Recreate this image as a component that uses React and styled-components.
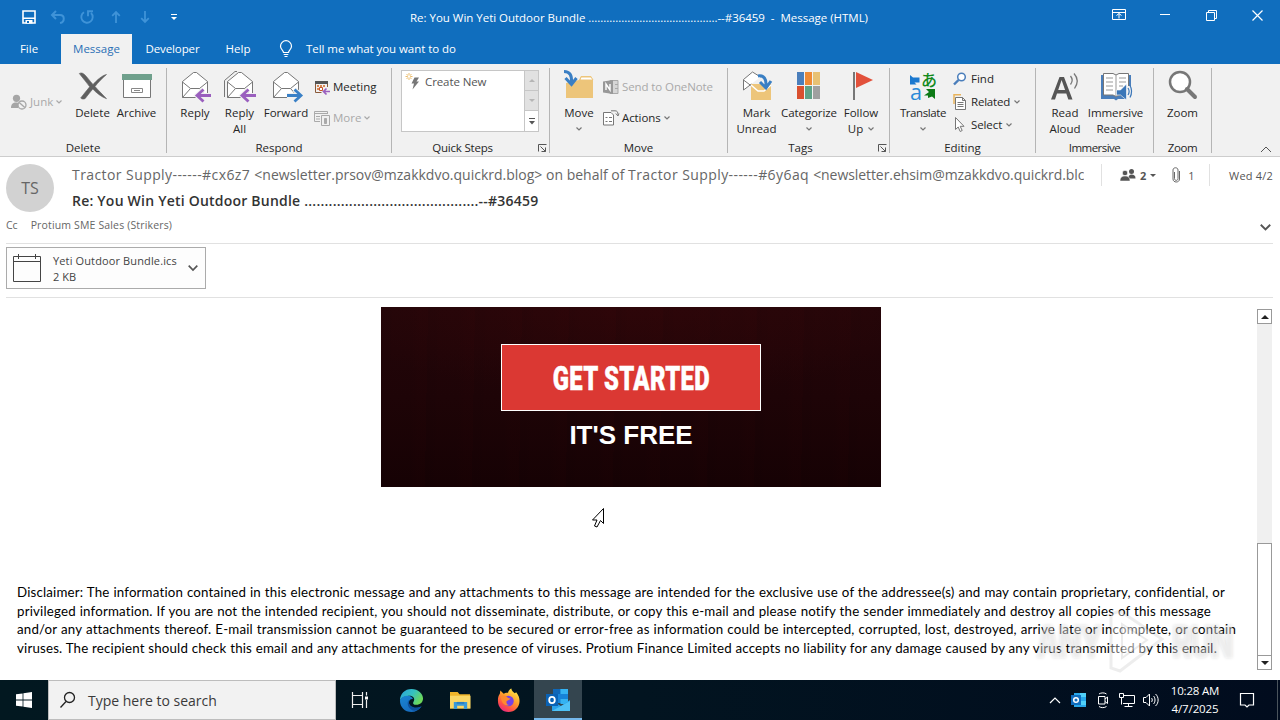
import React from 'react';
import styled, { createGlobalStyle } from 'styled-components';

const GlobalStyle = createGlobalStyle`
  * {
    box-sizing: border-box;
  }

  body {
    margin: 0;
    overflow: hidden;
    background: #fff;
    font-family: 'Open Sans', 'Noto Sans', sans-serif;
    font-size: 11.5px;
    color: #262626;
  }

  svg {
    display: block;
    flex: none;
    overflow: visible;
  }
`;

const Window = styled.div`
  width: 1280px;
  height: 720px;
  display: flex;
  flex-direction: column;
  overflow: hidden;
`;

const Label = styled.span`
  white-space: pre;
  letter-spacing: ${(p) => p.$ls || 0}px;
`;

/* ---------- title bar ---------- */

const TitleBar = styled.header`
  height: 34px;
  background: #106ebe;
  color: #fff;
  display: grid;
  grid-template-columns: 320px 638px 322px;
  align-items: center;
`;

const QuickAccess = styled.div`
  display: flex;
  align-items: center;
  gap: 13px;
  padding-left: 21px;
`;

const WindowTitle = styled.div`
  text-align: center;
`;

const WindowButtons = styled.div`
  display: flex;
  height: 30px;
  align-self: start;
  padding-left: 138px;
`;

const WindowButton = styled.div`
  width: 46px;
  display: flex;
  align-items: center;
  justify-content: center;
`;

const TabBar = styled.nav`
  height: 30px;
  background: #106ebe;
  color: #fff;
  display: flex;
`;

const Tab = styled.div`
  width: ${(p) => p.$width}px;
  padding-bottom: 1px;
  display: flex;
  align-items: center;
  justify-content: center;
  background: ${(p) => (p.$active ? '#f1f1f1' : 'transparent')};
  color: ${(p) => (p.$active ? '#2a6fb5' : '#fff')};
`;

const TellMe = styled.div`
  display: flex;
  align-items: center;
  gap: 13px;
  margin-left: 16px;
  padding-bottom: 1px;
`;

/* ---------- ribbon ---------- */

const Ribbon = styled.section`
  height: 93px;
  background: #f1f1f1;
  border-bottom: 1px solid #cdcdcd;
  display: flex;
`;

const Group = styled.div`
  width: ${(p) => p.$width}px;
  padding-top: 6px;
  display: flex;
  flex-direction: column;
`;

const GroupBody = styled.div`
  height: 70px;
  display: flex;
  padding-left: ${(p) => p.$left || 0}px;
`;

const GroupFooter = styled.div`
  height: 16px;
  line-height: 16px;
  display: flex;
  align-items: center;
`;

const GroupName = styled.div`
  flex: 1;
  text-align: center;
  white-space: nowrap;
`;

const Separator = styled.div`
  width: 1px;
  height: 85px;
  margin-top: 4px;
  background: #b5b5b5;
`;

const BigButton = styled.div`
  width: ${(p) => p.$width}px;
  display: flex;
  flex-direction: column;
  align-items: center;
  line-height: 16px;
  white-space: nowrap;

  > svg:first-child {
    margin-bottom: 3px;
  }
`;

const SecondLine = styled.div`
  height: 16px;
  display: flex;
  align-items: center;
  gap: 5px;
`;

const SmallColumn = styled.div`
  display: flex;
  flex-direction: column;
  width: ${(p) => (p.$width ? `${p.$width}px` : 'auto')};
  margin-left: ${(p) => p.$left || 0}px;
  margin-top: ${(p) => p.$top || 0}px;
`;

const SmallButton = styled.div`
  height: ${(p) => p.$height || 31}px;
  display: flex;
  align-items: center;
  gap: ${(p) => p.$gap || 3}px;
  color: ${(p) => (p.$disabled ? '#a9a9a9' : 'inherit')};
`;

const Gallery = styled.div`
  width: 138px;
  height: 62px;
  display: flex;
  border: 1px solid #c6c6c6;
  background: #fff;
`;

const GalleryItem = styled.div`
  flex: 1;
  height: 21px;
  display: flex;
  align-items: center;
  gap: 4px;
  padding-left: 3px;
  color: #555;
`;

const GalleryScroll = styled.div`
  width: 14px;
  display: grid;
  grid-template-rows: 20px 20px 20px;
  border-left: 1px solid #c6c6c6;
`;

const GalleryArrow = styled.div`
  display: flex;
  align-items: center;
  justify-content: center;
  background: ${(p) => (p.$off ? '#e1e1e1' : '#fff')};
  border-bottom: ${(p) => (p.$off ? '1px solid #c6c6c6' : 'none')};
`;

const RibbonEnd = styled.div`
  flex: 1;
  display: flex;
  justify-content: flex-end;
  align-items: flex-end;
  padding: 0 8px 3px 0;
`;

/* ---------- message header ---------- */

const Header = styled.section`
  height: 87px;
  margin: 0 7px 0 6px;
  border-bottom: 1px solid #e1e1e1;
  display: flex;
  flex-direction: column;
`;

const HeaderTop = styled.div`
  display: flex;
  height: 58px;
  padding-top: 7px;
`;

const Avatar = styled.div`
  width: 48px;
  height: 48px;
  border-radius: 50%;
  background: #d2d2d2;
  color: #666;
  font-size: 16px;
  display: flex;
  align-items: center;
  justify-content: center;
`;

const Sender = styled.div`
  width: 1013px;
  margin-left: 17px;
  padding-left: 1px;
  overflow: hidden;
  color: #666;
`;

const FromLine = styled.div`
  font-size: 14px;
  line-height: 22px;
  height: 24px;
  white-space: nowrap;
`;

const Subject = styled.div`
  font-size: 14px;
  line-height: 26px;
  font-weight: 600;
  color: #333;
`;

const HeaderMeta = styled.div`
  height: 22px;
  margin-left: 17px;
  flex: 1;
  display: flex;
  align-items: center;
  border-left: 1px solid #e1e1e1;
  color: #555;
  font-size: 11px;
`;

const MetaItem = styled.div`
  display: flex;
  align-items: center;
  gap: ${(p) => p.$gap}px;
  margin-left: ${(p) => p.$left}px;
`;

const MetaDate = styled.div`
  height: 22px;
  line-height: 24px;
  margin-left: auto;
  padding-left: 19px;
  border-left: 1px solid #e1e1e1;
  white-space: nowrap;
`;

const CcLine = styled.div`
  height: 20px;
  display: flex;
  align-items: center;
  gap: 13px;
  color: #666;
  font-size: 10.5px;

  > svg {
    margin-left: auto;
    margin-top: 4px;
    margin-right: 2px;
  }
`;

const Attachments = styled.section`
  height: 54px;
  margin: 0 7px 0 6px;
  padding-top: 3px;
  border-bottom: 1px solid #e1e1e1;
`;

const Attachment = styled.div`
  width: 200px;
  height: 42px;
  border: 1px solid #ababab;
  background: #fdfdfd;
  display: flex;
  align-items: center;
  padding-left: 5px;
  font-size: 11px;
  line-height: 16px;
  color: #444;
`;

const FileInfo = styled.div`
  width: 124px;
  margin-left: 11px;
  margin-right: 11px;
  padding-top: 1px;
  display: flex;
  flex-direction: column;
`;

/* ---------- message body ---------- */

const Body = styled.main`
  height: 382px;
  display: flex;
  position: relative;
`;

const Content = styled.article`
  width: 1257px;
  padding: 9px 0 0 17px;
`;

const Banner = styled.div`
  width: 500px;
  height: 180px;
  margin-left: 364px;
  padding-top: 37px;
  display: flex;
  flex-direction: column;
  align-items: center;
  background:
    repeating-linear-gradient(91deg, rgba(0, 0, 0, 0.04) 0 5px, transparent 14px 31px, rgba(80, 0, 0, 0.03) 39px 47px),
    radial-gradient(ellipse 300px 90px at 50% 0, rgba(52, 6, 9, 0.6), transparent),
    linear-gradient(#240609, #1e0407 50%, #160204);
`;

const CallToAction = styled.div`
  width: 260px;
  height: 67px;
  border: 1px solid #fff;
  background: #db3833;
  color: #fff;
  display: flex;
  align-items: center;
  justify-content: center;
`;

const CallText = styled.span`
  font-family: Roboto, sans-serif;
  font-weight: 900;
  font-size: 34px;
  letter-spacing: 0.5px;
  white-space: nowrap;
  -webkit-text-stroke: 0.5px #fff;
  transform: scaleX(0.7);
`;

const FreeText = styled.div`
  margin-top: 8px;
  font: bold 26px/32px 'Liberation Sans', Arial, sans-serif;
  color: #fff;
`;

const Disclaimer = styled.div`
  margin-top: 96px;
  font-family: Lato, 'Open Sans', sans-serif;
  font-size: 13.3px;
  color: #000;
`;

const DisclaimerLine = styled.div`
  width: ${(p) => p.$width}px;
  height: 18.7px;
  line-height: 18.7px;
  white-space: nowrap;
  text-align: justify;
  text-align-last: justify;
  letter-spacing: 0.18px;
`;

const ScrollBar = styled.div`
  width: 15px;
  height: 361px;
  margin-top: 11px;
  background: #f0f0f0;
  display: flex;
  flex-direction: column;
`;

const ScrollButton = styled.div`
  height: 15px;
  border: 1px solid #999;
  background: #fff;
  display: flex;
  align-items: center;
  justify-content: center;
`;

const ScrollThumb = styled.div`
  height: 112px;
  margin-top: auto;
  border: 1px solid #999;
  border-bottom: none;
  background: #fff;
`;

const Pointer = styled.svg`
  position: absolute;
  left: 591px;
  top: 210px;
`;

const Watermark = styled.div`
  position: absolute;
  left: 1036px;
  top: 310px;
  width: 200px;
  height: 66px;
  display: flex;
  align-items: center;
  justify-content: space-between;
  font: 900 46px/60px Inter, sans-serif;
  color: rgba(255, 255, 255, 0.42);
  text-shadow: 0 0 4px rgba(0, 0, 0, 0.12);
`;

const WatermarkWord = styled.span`
  width: 64px;
  letter-spacing: -3px;
  transform: scaleX(0.66);
  transform-origin: left;
`;

/* ---------- taskbar ---------- */

const Taskbar = styled.footer`
  height: 40px;
  background: linear-gradient(90deg, #021820, #021420 50%, #010c1e);
  color: #fff;
  display: flex;
`;

const StartButton = styled.div`
  width: 48px;
  display: flex;
  align-items: center;
  justify-content: center;
`;

const SearchBox = styled.div`
  width: 288px;
  border: 1px solid #bdbdbd;
  background: #f2f2f2;
  color: #3a3a3a;
  display: flex;
  align-items: center;
  gap: 11px;
  padding-left: 10px;
  font-size: 14px;
`;

const TaskButton = styled.div`
  width: ${(p) => p.$width}px;
  display: flex;
  align-items: center;
  justify-content: center;
  padding-top: ${(p) => (p.$active ? 2 : 0)}px;
  background: ${(p) => (p.$active ? '#34454f' : 'transparent')};
  border-bottom: ${(p) => (p.$active ? '2px solid #76b9ed' : 'none')};
`;

const Tray = styled.div`
  margin-left: auto;
  display: flex;
`;

const TrayIcon = styled.div`
  width: ${(p) => p.$width || 24}px;
  display: flex;
  align-items: center;
  justify-content: center;
`;

const Clock = styled.div`
  width: 64px;
  display: flex;
  flex-direction: column;
  align-items: center;
  font-size: 11.5px;
  line-height: 18px;
  padding-top: 2px;
`;

const ShowDesktop = styled.div`
  width: 3px;
  margin-left: 10px;
  border-left: 1px solid #4a545c;
`;

/* ---------- icons ---------- */

const Chevron = ({ color = '#777' }) => (
  <svg width="6" height="4" viewBox="0 0 6 4">
    <path d="M0.5 0.5L3 3L5.5 0.5" fill="none" stroke={color} strokeWidth="1.2" />
  </svg>
);

const BigChevron = ({ color = '#555', size = 10 }) => (
  <svg width={size} height={size * 0.6} viewBox="0 0 10 6">
    <path d="M0.7 0.7L5 5L9.3 0.7" fill="none" stroke={color} strokeWidth="1.7" />
  </svg>
);

const Launcher = () => (
  <svg width="16" height="16" viewBox="0 0 16 16">
    <path d="M5.500 11.500v-7h8M7.500 6.500l5 5M12.500 7.500v4h-4" fill="none" stroke="#555" />
  </svg>
);

const SaveIcon = () => (
  <svg width="16" height="16" viewBox="0 0 16 16">
    <path d="M2 2h12v12H2z" fill="none" stroke="#fff" strokeWidth="1.6" />
    <path d="M2 8.5h12v1.6H2zM4.5 11h7v3.5h-7z" fill="#fff" />
    <path d="M6 12h2v2H6z" fill="#106ebe" />
  </svg>
);

const UndoIcon = () => (
  <svg width="16" height="16" viewBox="0 0 16 16">
    <path d="M6 2L2 6l4 4M2.5 6H10c5 0 5 7 0 8" fill="none" stroke="#3f93d8" strokeWidth="2" />
  </svg>
);

const RedoIcon = () => (
  <svg width="16" height="16" viewBox="0 0 16 16">
    <path d="M5 3.2A5.7 5.7 0 1 0 12 4M9 7.2V2.3h5" fill="none" stroke="#3f93d8" strokeWidth="1.9" />
  </svg>
);

const ArrowIcon = ({ down }) => (
  <svg width="16" height="16" viewBox="0 0 16 16" transform={down ? 'rotate(180)' : undefined}>
    <path d="M8 14V3M4.2 6.8L8 3l3.8 3.8" fill="none" stroke="#3f93d8" strokeWidth="1.8" />
  </svg>
);

const CustomizeIcon = () => (
  <svg width="16" height="16" viewBox="0 0 16 16">
    <path d="M5 5.5h6" stroke="#fff" />
    <path d="M5 8h6l-3 3z" fill="#fff" />
  </svg>
);

const BulbIcon = () => (
  <svg width="14" height="18" viewBox="0 0 14 18">
    <path d="M4.5 12.5c0-2-3-3-3-6.3a5.5 5.5 0 0 1 11 0c0 3.300-3 4.300-3 6.300zM4.700 14.500h4.600M5.500 16.500h3" fill="none" stroke="#fff" strokeWidth="1.2" />
  </svg>
);

const JunkIcon = () => (
  <svg width="16" height="16" viewBox="0 0 16 16">
    <circle cx="5.500" cy="4.300" r="3.600" fill="#a6a6a6" />
    <path d="M0 14c0-4 2-5.500 5-5.500 1.500 0 2.500.3 3 .8L7 14z" fill="#a6a6a6" />
    <circle cx="11" cy="11" r="4" fill="#f1f1f1" stroke="#a6a6a6" strokeWidth="1.300" />
    <path d="M8.200 8.500l5.600 5" stroke="#a6a6a6" strokeWidth="1.300" />
  </svg>
);

const DeleteIcon = () => (
  <svg width="32" height="32" viewBox="0 0 32 32">
    <path d="M2.300 3.500C4 2.500 6 3 7.500 4.500c3 3 5 6 8.500 10C20 10 25 5.500 29.500 4.500c-4.500 4-8.500 8-11.500 12 3.500 4 7 7.500 11.500 12.200-5-1.700-10-5.700-13.700-9.700-3 3.500-5.300 6.500-7.600 9.500-1.400 1-3.600.6-4.500-.5 3-4 6-7.500 9-11.200C9.500 12 5.500 8 2.300 3.500z" fill="#5f5f5f" stroke="#5f5f5f" strokeWidth="0.600" />
  </svg>
);

const ArchiveIcon = () => (
  <svg width="32" height="32" viewBox="0 0 32 32">
    <path d="M2.500 9.500h27v18h-27z" fill="#fff" stroke="#777" />
    <path d="M1 4h30v6H1z" fill="#6fa08c" />
    <path d="M10.500 18.500h11v4h-11zM13 20.500h6" fill="none" stroke="#888" />
  </svg>
);

const Envelope = ({ x = 0 }) => (
  <g transform={`translate(${x} 0)`} stroke="#777" fill="#fff">
    <path d="M3.500 11.500L14.500 2.500h3l11 9v16h-25z" />
    <path d="M3.500 12l8 6.500h9l8-6.500M3.500 27.500l8-9M28.500 27.500l-8-9" fill="none" />
  </g>
);

const ReplyArrow = ({ color, right }) => (
  <g transform={right ? 'translate(48 0) scale(-1 1)' : undefined}>
    <path d="M32 25.500H18.500M24.500 19.500l-6.500 6 6.500 6" fill="none" stroke="#f1f1f1" strokeWidth="5" />
    <path d="M32 25.500H18.500M24.500 19.500l-6.500 6 6.500 6" fill="none" stroke={color} strokeWidth="2.800" />
  </g>
);

const ReplyIcon = () => (
  <svg width="32" height="32" viewBox="0 0 32 32">
    <Envelope />
    <ReplyArrow color="#9a5fbe" />
  </svg>
);

const ReplyAllIcon = () => (
  <svg width="32" height="32" viewBox="0 0 32 32">
    <path d="M0.500 27V10.500L11 1.500h2" fill="none" stroke="#777" />
    <Envelope />
    <ReplyArrow color="#9a5fbe" />
  </svg>
);

const ForwardIcon = () => (
  <svg width="32" height="32" viewBox="0 0 32 32">
    <Envelope />
    <g transform="translate(1 0)">
      <ReplyArrow color="#3a80c6" right />
    </g>
  </svg>
);

const MeetingIcon = () => (
  <svg width="16" height="16" viewBox="0 0 16 16">
    <path d="M1.500 3v10.500h6M13.500 3v5" fill="none" stroke="#8a5a3a" />
    <path d="M1 2h13v3H1z" fill="#555" />
    <path d="M3 6h2v2H3zM6 6h2v2H6zM9 6h2v2H9zM3 9h2v2H3z" fill="#d98a56" />
    <path d="M5.500 8.500h3v3h-3z" fill="#fff" stroke="#c8552a" />
    <path d="M16 12.500H9.500M12.500 9.500l-3 3 3 3" fill="none" stroke="#9a5fbe" strokeWidth="1.700" />
  </svg>
);

const MoreIcon = () => (
  <svg width="16" height="16" viewBox="0 0 16 16" fill="none" stroke="#aaa">
    <path d="M6 11.500H.500v-10h13V4M.500 3.500h13M2 6.500h4M2 9h4" />
    <path d="M7.500 5.500h8v10h-8z" />
    <path d="M10.500 8.500h2v5h-2z" fill="#aaa" />
  </svg>
);

const QuickStepIcon = () => (
  <svg width="16" height="18" viewBox="0 0 16 18">
    <path d="M9.500 4.500h4.500l-2.500 4H14l-6.500 8 1.500-6H6.500z" fill="#777" />
    <path d="M4 0v7M.500 3.500h7M1.500 1l5 5M6.500 1l-5 5" stroke="#e9b45c" strokeWidth="0.900" />
    <circle cx="4" cy="3.500" r="1.200" fill="#fff" />
  </svg>
);

const MoveIcon = () => (
  <svg width="32" height="32" viewBox="0 0 32 32">
    <path d="M3 28V13l13-3 2-4h10l2 4v18z" fill="#edc57a" />
    <path d="M18 7h10l2 3H17z" fill="#fff" stroke="#edc57a" />
    <path d="M1 1.500c6 0 8 4 7.500 11M2.500 8l6 6.500 5-6.500" fill="none" stroke="#3a7fc4" strokeWidth="3" />
  </svg>
);

const OneNoteIcon = () => (
  <svg width="16" height="16" viewBox="0 0 16 16">
    <path d="M7 1.500h8v13H7zM12 5.500h3M12 9.500h3" fill="#d6d6d6" stroke="#a9a9a9" />
    <path d="M0 2.500L10 1v14L0 13.500z" fill="#989898" />
    <path d="M3 11V5l4 6V5" fill="none" stroke="#fff" strokeWidth="1.400" />
  </svg>
);

const ActionsIcon = () => (
  <svg width="16" height="16" viewBox="0 0 16 16" fill="none" stroke="#777">
    <path d="M.500 2.500H8l2.500 2.500v10H.500z" fill="#fff" />
    <path d="M2.500 7.500h2M2.500 11.500h2M6 7.500h3M6 11.500h3" />
    <path d="M8 .800h4c2 0 3 1 3 4M12.800 3.500L15 6l1-2.500" />
  </svg>
);

const MarkUnreadIcon = () => (
  <svg width="32" height="32" viewBox="0 0 32 32">
    <path d="M2.500 20V9.500L11.500 2l8 5" fill="#fff" stroke="#777" />
    <path d="M2.500 10l8 6M2.500 20l8-6" fill="none" stroke="#777" />
    <path d="M10 14h20v16H10z" fill="#edc57a" />
    <path d="M10 15l7 6h6l7-6" fill="none" stroke="#fff" strokeWidth="1.500" />
    <path d="M17 6c6-1 8.500 3 8 10M19 12l6 6 5-7" fill="none" stroke="#3a7fc4" strokeWidth="3" />
  </svg>
);

const CategorizeIcon = () => (
  <svg width="32" height="32" viewBox="0 0 32 32">
    <path d="M4 2h7v13H4z" fill="#4a7ebb" />
    <path d="M12 2h7v13h-7z" fill="#ee8a35" />
    <path d="M20 2h7v13h-7z" fill="#e8c173" />
    <path d="M4 16h7v13H4z" fill="#d9502f" />
    <path d="M12 16h7v13h-7z" fill="#5fa287" />
    <path d="M20 16h7v13h-7z" fill="#a0a0a0" />
  </svg>
);

const FlagIcon = () => (
  <svg width="32" height="32" viewBox="0 0 32 32">
    <path d="M9 2v28" stroke="#777" strokeWidth="2" />
    <path d="M11 2l17 8-17 8z" fill="#e2513b" />
  </svg>
);

const GlyphText = styled.text`
  font-family: ${(p) => p.$family || "'Open Sans', sans-serif"};
`;

const TranslateIcon = () => (
  <svg width="32" height="32" viewBox="0 0 32 32">
    <GlyphText x="3" y="29.500" fontSize="22" fontWeight="500" fill="#2a8ad8" textLength="12" lengthAdjust="spacingAndGlyphs">a</GlyphText>
    <GlyphText x="14" y="15.500" fontSize="16" fontWeight="500" fill="#128a1c" $family="'Noto Sans CJK JP', sans-serif">あ</GlyphText>
    <path d="M3 5l3 2.500h6.500v5H7.500l2 2H3z" fill="#1b78cf" />
    <path d="M28 29V19h-9l3 3L17 25.500h4v2.500l4-1.500z" fill="#0d7a16" />
  </svg>
);

const FindIcon = () => (
  <svg width="14" height="14" viewBox="0 0 14 14">
    <circle cx="8.500" cy="5" r="3.800" fill="#fff" stroke="#4a7ebb" strokeWidth="1.500" />
    <path d="M5.500 8L1 12.500" stroke="#4a7ebb" strokeWidth="2.400" />
  </svg>
);

const RelatedIcon = () => (
  <svg width="14" height="16" viewBox="0 0 14 16">
    <path d="M1 10V.800h7" fill="none" stroke="#e9b45c" strokeWidth="1.500" />
    <path d="M2.500 3.500h7l3 3v9h-10zM9.500 3.500v3h3M4.500 8.500h6M4.500 10.500h6M4.500 12.500h6" fill="#fff" stroke="#777" />
  </svg>
);

const SelectIcon = () => (
  <svg width="14" height="16" viewBox="0 0 14 16">
    <path d="M2.500.500v12l2.700-2.500 2 4.500 2-1-2-4.200H11z" fill="#fff" stroke="#777" />
  </svg>
);

const ReadAloudIcon = () => (
  <svg width="32" height="32" viewBox="0 0 32 32">
    <path d="M2 29.500L10.500 7h4.500l8.500 22.500h-4.200l-2-6H8l-2 6zM9.200 20h6.900L12.600 10z" fill="#555" fillRule="evenodd" />
    <path d="M21.500 6c2 2.500 2 6 0 8.500M25 3.500c4 4.500 4 10 .500 15" fill="none" stroke="#777" strokeWidth="1.300" />
  </svg>
);

const ReaderIcon = () => (
  <svg width="32" height="32" viewBox="0 0 32 32">
    <path d="M1 5h30v24H18l-2 1.500-2-1.500H1z" fill="#4a7ebb" />
    <path d="M3.500 3.500h9.500l3 1.500 3-1.500h9.500V25H19l-3 1.500-3-1.500H3.500z" fill="#fff" stroke="#777" />
    <path d="M16 5v21M6 8h7M6 12h7M6 16h7M6 20h7M19 8h7M19 12h7M19 16h4" stroke="#999" fill="none" />
    <path d="M25 16h7v15h-7z" fill="#f1f1f1" />
    <path d="M16.500 20h4l6-6v16l-6-5h-4z" fill="#3a76b8" stroke="#fff" strokeWidth="0.600" />
    <path d="M28 18c1.300 2 1.300 5 0 7M30 15.500c2 3.500 2 8 0 12" fill="none" stroke="#3a76b8" strokeWidth="1.200" />
  </svg>
);

const ZoomIcon = () => (
  <svg width="32" height="32" viewBox="0 0 32 32">
    <circle cx="13" cy="12" r="10" fill="#fff" stroke="#777" strokeWidth="2.500" />
    <path d="M20 19l8 8" stroke="#777" strokeWidth="4" strokeLinecap="round" />
  </svg>
);

const PeopleIcon = () => (
  <svg width="16" height="14" viewBox="0 0 16 14" fill="#555">
    <circle cx="11.500" cy="3.500" r="2.500" />
    <path d="M8.500 10.500c0-3 1-4 3-4 2.500 0 4 1 4 4z" />
    <circle cx="5" cy="5" r="2.800" stroke="#fff" strokeWidth="0.800" />
    <path d="M0 13c0-3.500 1.500-5 5-5s5 1.500 5 5z" stroke="#fff" strokeWidth="0.500" />
  </svg>
);

const ClipIcon = () => (
  <svg width="9" height="16" viewBox="0 0 9 16">
    <path d="M2.500 5v6.500c0 2.500 3.500 2.500 3.500 0V3c0-3-5-3-5 0v9c0 4 6.500 4 6.500 0V4" fill="none" stroke="#666" />
  </svg>
);

const CalendarIcon = () => (
  <svg width="30" height="30" viewBox="0 0 30 30">
    <path d="M1.500 3.500h27v25h-27zM1.500 8.500h27M6.500 1v5M23.500 1v5" fill="none" stroke="#444" />
  </svg>
);

const Triangle = ({ up, color = '#222', size = 8 }) => (
  <svg width={size} height={size / 2} viewBox="0 0 8 4">
    <path d={up ? 'M0 4L4 0l4 4z' : 'M0 0h8L4 4z'} fill={color} />
  </svg>
);

const WindowsLogo = () => (
  <svg width="16" height="16" viewBox="0 0 16 16" fill="#fff">
    <path d="M0 2.300L6.600 1.400v6.200H0zM7.400 1.300L16 0v7.600H7.400zM0 8.400h6.600v6.200L0 13.700zM7.400 8.400H16V16l-8.600-1.200z" />
  </svg>
);

const SearchIcon = () => (
  <svg width="18" height="18" viewBox="0 0 18 18">
    <circle cx="10.500" cy="6.500" r="5" fill="none" stroke="#222" strokeWidth="1.300" />
    <path d="M7 10.500L1.500 16.500" stroke="#222" strokeWidth="1.300" />
  </svg>
);

const TaskViewIcon = () => (
  <svg width="18" height="18" viewBox="0 0 18 18">
    <path d="M1.500 1v3.500h10V1M1.500 17v-3.500h10V17M1.500 4.500v9M11.500 4.500v9M15.500 1v3.500M15.500 9v8" fill="none" stroke="#eee" strokeWidth="1.200" />
    <path d="M14 5.500h3v3h-3z" fill="#fff" />
  </svg>
);

const EdgeIcon = () => (
  <svg width="25" height="25" viewBox="0 0 26 26">
    <defs>
      <linearGradient id="edgeTop" x1="0" y1="0" x2="1" y2="0.500">
        <stop offset="0" stopColor="#2ba3dc" />
        <stop offset="0.550" stopColor="#35c1c0" />
        <stop offset="1" stopColor="#6cd85a" />
      </linearGradient>
      <linearGradient id="edgeLow" x1="0" y1="0" x2="0.800" y2="1">
        <stop offset="0" stopColor="#1a86d3" />
        <stop offset="1" stopColor="#1567bb" />
      </linearGradient>
    </defs>
    <path d="M1 13C1 6 6 1 13 1s12 5 12 10c0 4-3 6.500-7 6.500-3 0-4-1.500-3-3 2.500-4-1-7-5-6.500-5 .500-8 3-9 5z" fill="url(#edgeTop)" />
    <path d="M1 13c1-3 4-5 8-5 3 0 5 1.500 5.500 3.500-4-1-6 5-1.500 8 4 2.500 8 1 10.500-.500C21 23 17 25 13 25 6 25 1 20 1 13z" fill="url(#edgeLow)" />
    <path d="M10 12.500c-2 3-1 8.500 4.500 11 4 .500 7-1.500 9-4.500-3 1.500-6.500 2-9.500.500-3.500-1.500-4-4-4-7z" fill="#0d4f9c" />
  </svg>
);

const ExplorerIcon = () => (
  <svg width="23" height="21" viewBox="0 0 24 22">
    <path d="M1 2h8l2 2.500h11V19H1z" fill="#f0b429" />
    <path d="M1 6h21.500v13.500H1z" fill="#fbd765" />
    <path d="M5 20v-7.500h14V20h-3.500v-3.500h-7V20z" fill="#3a9ad9" />
    <path d="M8 12.500h8v2H8z" fill="#2b7fc0" />
  </svg>
);

const FirefoxIcon = () => (
  <svg width="25" height="25" viewBox="0 0 26 26">
    <defs>
      <linearGradient id="fox" x1="0.800" y1="0" x2="0.200" y2="1">
        <stop offset="0" stopColor="#fff04a" />
        <stop offset="0.450" stopColor="#ff9a2b" />
        <stop offset="0.750" stopColor="#ff4f47" />
        <stop offset="1" stopColor="#e3238c" />
      </linearGradient>
    </defs>
    <path d="M2 13c0-3 .500-5 2-7l.500-3.500L8 6c1.500-1 3-1 4.500-1C13 3 14.500 1 16 .500c0 2.500 2 3.500 3.500 5L21 4.500c2.500 3 3.500 6 3.500 9C24.500 20 19.500 25 13 25S2 20 2 13z" fill="url(#fox)" />
    <circle cx="13" cy="13.500" r="5.500" fill="#7542e5" />
    <path d="M5 8.500c3-1.500 6 0 7.500 2l2.500.300c0 1.500-3 1.500-4 3 0 0-1 3.500 3 4-4 1.500-8.500-1-9-9.300z" fill="#ff8a2e" />
  </svg>
);

const OutlookIcon = () => (
  <svg width="26" height="26" viewBox="0 0 26 26">
    <path d="M8 2h15v14H8z" fill="#1683d8" />
    <path d="M8 2h7.500v5H8z" fill="#0f67b8" />
    <path d="M15.500 2H23v5h-7.500zM15.500 12H23v5h-7.500z" fill="#35b3f2" />
    <path d="M7 14l9 5 9-6v11H7z" fill="#2aa2ea" />
    <path d="M7 24l18-10v10z" fill="#5fd0fb" opacity="0.700" />
    <path d="M1 7h12v12H1z" fill="#0a62b5" />
    <ellipse cx="7" cy="13" rx="2.800" ry="3.200" fill="none" stroke="#fff" strokeWidth="1.800" />
  </svg>
);

const TrayOutlookIcon = () => (
  <svg width="16" height="16" viewBox="0 0 16 16">
    <path d="M3 1h12v14H3z" fill="#28a8ea" />
    <path d="M9 1h6v4H9zM9 9h6v4H9z" fill="#50d0f8" />
    <path d="M0 3h10v10H0z" fill="#0f6cbd" />
    <circle cx="5" cy="8" r="2.300" fill="none" stroke="#fff" strokeWidth="1.500" />
  </svg>
);

const MeetIcon = () => (
  <svg width="16" height="18" viewBox="0 0 16 18" fill="none" stroke="#fff">
    <path d="M3.500 5.500h6.500v7.500H3.500zM10 8l2.500-2v6.500L10 10.500M4 3c2-1.500 5.500-1.500 7.500 0M4 15.500c2 1.500 5.500 1.500 7.500 0" />
  </svg>
);

const NetworkIcon = () => (
  <svg width="18" height="16" viewBox="0 0 18 16" fill="none" stroke="#fff">
    <path d="M6 3.500h10.500v8H5M10.500 11.500v3M6.500 14.500h8M1.500 1.500h4v4h-4zM3.500 5.500v7" />
  </svg>
);

const VolumeIcon = () => (
  <svg width="18" height="16" viewBox="0 0 18 16" fill="none" stroke="#fff">
    <path d="M1.500 5.500H4L7.500 2v12L4 10.500H1.500zM9.500 6c1 1 1 3 0 4M11.500 4c2 2 2 6 0 8M13.500 2c3.500 3 3.500 9 0 12" />
  </svg>
);

const NotificationIcon = () => (
  <svg width="18" height="18" viewBox="0 0 18 18">
    <path d="M2.500 2.500h13v11.500h-4.500l-2 2-2-2H2.500z" fill="none" stroke="#fff" strokeWidth="1.200" />
  </svg>
);

const PlayMark = () => (
  <svg width="58" height="62" viewBox="0 0 58 62">
    <path d="M4 4l9-3 42 28-42 32-9-3z" fill="#fff" fillOpacity="0.400" stroke="#000" strokeOpacity="0.070" strokeWidth="3" />
    <path d="M15 14l25 16-25 18z" fill="#fff" fillOpacity="0.250" stroke="#000" strokeOpacity="0.080" strokeWidth="2" />
  </svg>
);

const dots = '.'.repeat(43);

const disclaimer = [
  { width: 1208, text: 'Disclaimer:  The information contained in this electronic message and any attachments to this message are intended for the exclusive use of the addressee(s) and may contain proprietary, confidential, or' },
  { width: 1194, text: 'privileged information. If you are not the intended recipient, you should not disseminate, distribute, or copy this e-mail and please notify the sender immediately and destroy all copies of this message' },
  { width: 1219, text: 'and/or any attachments thereof. E-mail transmission cannot be guaranteed to be secured or error-free as information could be intercepted, corrupted, lost, destroyed, arrive late or incomplete, or contain' },
  { width: 1200, text: 'viruses. The recipient should check this email and any attachments for the presence of viruses. Protium Finance Limited accepts no liability for any damage caused by any virus transmitted by this email.' },
];

const RibbonBar = () => (
  <Ribbon>
    <Group $width={166}>
      <GroupBody $left={11}>
        <SmallColumn $top={16} $width={59}>
          <SmallButton $disabled>
            <JunkIcon />
            <Label>Junk</Label>
            <Chevron color="#a9a9a9" />
          </SmallButton>
        </SmallColumn>
        <BigButton $width={45}>
          <DeleteIcon />
          <Label>Delete</Label>
        </BigButton>
        <BigButton $width={43}>
          <ArchiveIcon />
          <Label>Archive</Label>
        </BigButton>
      </GroupBody>
      <GroupFooter><GroupName>Delete</GroupName></GroupFooter>
    </Group>
    <Separator />
    <Group $width={224}>
      <GroupBody $left={6}>
        <BigButton $width={44}>
          <ReplyIcon />
          <Label>Reply</Label>
        </BigButton>
        <BigButton $width={45}>
          <ReplyAllIcon />
          <Label>Reply</Label>
          <Label>All</Label>
        </BigButton>
        <BigButton $width={48}>
          <ForwardIcon />
          <Label>Forward</Label>
        </BigButton>
        <SmallColumn $left={4} $top={1}>
          <SmallButton>
            <MeetingIcon />
            <Label>Meeting</Label>
          </SmallButton>
          <SmallButton $disabled>
            <MoreIcon />
            <Label>More</Label>
            <Chevron color="#a9a9a9" />
          </SmallButton>
        </SmallColumn>
      </GroupBody>
      <GroupFooter><GroupName>Respond</GroupName></GroupFooter>
    </Group>
    <Separator />
    <Group $width={157}>
      <GroupBody $left={9}>
        <Gallery>
          <GalleryItem>
            <QuickStepIcon />
            <Label $ls={-0.1}>Create New</Label>
          </GalleryItem>
          <GalleryScroll>
            <GalleryArrow $off><Triangle up color="#b5b5b5" size={6} /></GalleryArrow>
            <GalleryArrow $off><Triangle color="#b5b5b5" size={6} /></GalleryArrow>
            <GalleryArrow>
              <svg width="6" height="7" viewBox="0 0 6 7">
                <path d="M0 0.500h6" stroke="#555" />
                <path d="M0 3h6l-3 3.500z" fill="#555" />
              </svg>
            </GalleryArrow>
          </GalleryScroll>
        </Gallery>
      </GroupBody>
      <GroupFooter><GroupName><Label $ls={-0.2}>Quick Steps</Label></GroupName><Launcher /></GroupFooter>
    </Group>
    <Separator />
    <Group $width={177}>
      <GroupBody $left={7}>
        <BigButton $width={44}>
          <MoveIcon />
          <Label>Move</Label>
          <SecondLine><Chevron /></SecondLine>
        </BigButton>
        <SmallColumn $left={2} $top={1}>
          <SmallButton $disabled>
            <OneNoteIcon />
            <Label $ls={-0.1}>Send to OneNote</Label>
          </SmallButton>
          <SmallButton>
            <ActionsIcon />
            <Label $ls={-0.1}>Actions</Label>
            <Chevron />
          </SmallButton>
        </SmallColumn>
      </GroupBody>
      <GroupFooter><GroupName>Move</GroupName></GroupFooter>
    </Group>
    <Separator />
    <Group $width={161}>
      <GroupBody $left={4}>
        <BigButton $width={49}>
          <MarkUnreadIcon />
          <Label>Mark</Label>
          <Label>Unread</Label>
        </BigButton>
        <BigButton $width={56}>
          <CategorizeIcon />
          <Label $ls={-0.1}>Categorize</Label>
          <SecondLine><Chevron /></SecondLine>
        </BigButton>
        <BigButton $width={48}>
          <FlagIcon />
          <Label>Follow</Label>
          <SecondLine>Up <Chevron /></SecondLine>
        </BigButton>
      </GroupBody>
      <GroupFooter><GroupName>Tags</GroupName><Launcher /></GroupFooter>
    </Group>
    <Separator />
    <Group $width={145}>
      <GroupBody $left={6}>
        <BigButton $width={54}>
          <TranslateIcon />
          <Label $ls={-0.4}>Translate</Label>
          <SecondLine><Chevron /></SecondLine>
        </BigButton>
        <SmallColumn $left={3} $top={-1}>
          <SmallButton $height={19} $gap={4}>
            <FindIcon />
            <Label>Find</Label>
          </SmallButton>
          <SmallButton $height={27} $gap={4}>
            <RelatedIcon />
            <Label $ls={-0.2}>Related</Label>
            <Chevron />
          </SmallButton>
          <SmallButton $height={19} $gap={4}>
            <SelectIcon />
            <Label $ls={-0.1}>Select</Label>
            <Chevron />
          </SmallButton>
        </SmallColumn>
      </GroupBody>
      <GroupFooter><GroupName>Editing</GroupName></GroupFooter>
    </Group>
    <Separator />
    <Group $width={117}>
      <GroupBody $left={6}>
        <BigButton $width={46}>
          <ReadAloudIcon />
          <Label>Read</Label>
          <Label>Aloud</Label>
        </BigButton>
        <BigButton $width={55}>
          <ReaderIcon />
          <Label $ls={-0.1}>Immersive</Label>
          <Label>Reader</Label>
        </BigButton>
      </GroupBody>
      <GroupFooter><GroupName><Label $ls={-0.55}>Immersive</Label></GroupName></GroupFooter>
    </Group>
    <Separator />
    <Group $width={57}>
      <GroupBody>
        <BigButton $width={57}>
          <ZoomIcon />
          <Label>Zoom</Label>
        </BigButton>
      </GroupBody>
      <GroupFooter><GroupName><Label $ls={-0.4}>Zoom</Label></GroupName></GroupFooter>
    </Group>
    <Separator />
    <RibbonEnd>
      <svg width="12" height="7" viewBox="0 0 12 7">
        <path d="M1 6l5-5 5 5" fill="none" stroke="#555" />
      </svg>
    </RibbonEnd>
  </Ribbon>
);

const App = () => (
  <Window>
    <GlobalStyle />
    <TitleBar>
      <QuickAccess>
        <SaveIcon />
        <UndoIcon />
        <RedoIcon />
        <ArrowIcon />
        <ArrowIcon down />
        <CustomizeIcon />
      </QuickAccess>
      <WindowTitle>
        <Label $ls={-0.02}>{`Re: You Win Yeti Outdoor Bundle ${dots}--#36459  -  Message (HTML)`}</Label>
      </WindowTitle>
      <WindowButtons>
        <WindowButton>
          <svg width="14" height="12" viewBox="0 0 14 12" fill="none" stroke="#fff">
            <path d="M.500.500h13v10H.500zM.500 3.500h13M7 9.500v-5M4.500 6.500L7 4.500l2.500 2" />
          </svg>
        </WindowButton>
        <WindowButton>
          <svg width="10" height="2" viewBox="0 0 10 2"><path d="M0 .500h10" stroke="#fff" /></svg>
        </WindowButton>
        <WindowButton>
          <svg width="11" height="11" viewBox="0 0 11 11" fill="none" stroke="#fff">
            <path d="M.500 2.500h8v8h-8zM2.500 2.500v-2h8v8h-2" />
          </svg>
        </WindowButton>
        <WindowButton>
          <svg width="11" height="11" viewBox="0 0 11 11"><path d="M.500.500l10 10M10.500.500l-10 10" stroke="#fff" strokeWidth="1.200" /></svg>
        </WindowButton>
      </WindowButtons>
    </TitleBar>
    <TabBar>
      <Tab $width={61}><Label> File  </Label></Tab>
      <Tab $width={71} $active><Label>Message</Label></Tab>
      <Tab $width={81}><Label $ls={-0.1}>Developer</Label></Tab>
      <Tab $width={50}><Label>Help</Label></Tab>
      <TellMe>
        <BulbIcon />
        <Label $ls={-0.05}>Tell me what you want to do</Label>
      </TellMe>
    </TabBar>
    <RibbonBar />
    <Header>
      <HeaderTop>
        <Avatar>TS</Avatar>
        <Sender>
          <FromLine>
            <Label $ls={0.42}>{'Tractor Supply------#cx6z7 '}</Label>
            <Label>{'<newsletter.prsov@mzakkdvo.quickrd.blog> '}</Label>
            <Label>{'on behalf of '}</Label>
            <Label $ls={0.42}>{'Tractor Supply------#6y6aq '}</Label>
            <Label $ls={-0.07}>{'<newsletter.ehsim@mzakkdvo.quickrd.blc'}</Label>
          </FromLine>
          <Subject>
            <Label $ls={0.22}>{`Re: You Win Yeti Outdoor Bundle ${dots}--#36459`}</Label>
          </Subject>
        </Sender>
        <HeaderMeta>
          <MetaItem $left={18} $gap={4}>
            <PeopleIcon />
            <b>2</b>
            <Triangle color="#555" size={6} />
          </MetaItem>
          <MetaItem $left={16} $gap={7}>
            <ClipIcon />
            1
          </MetaItem>
          <MetaDate><Label $ls={0.2}>Wed 4/2</Label></MetaDate>
        </HeaderMeta>
      </HeaderTop>
      <CcLine>
        <Label>Cc</Label>
        <Label $ls={0.15}>Protium SME Sales (Strikers)</Label>
        <BigChevron size={11} />
      </CcLine>
    </Header>
    <Attachments>
      <Attachment>
        <CalendarIcon />
        <FileInfo>
          <Label $ls={0.13}>Yeti Outdoor Bundle.ics</Label>
          <Label>2 KB</Label>
        </FileInfo>
        <BigChevron size={10} />
      </Attachment>
    </Attachments>
    <Body>
      <Content>
        <Banner>
          <CallToAction><CallText>GET STARTED</CallText></CallToAction>
          <FreeText>IT'S FREE</FreeText>
        </Banner>
        <Disclaimer>
          {disclaimer.map((line) => (
            <DisclaimerLine key={line.width} $width={line.width}>{line.text}</DisclaimerLine>
          ))}
        </Disclaimer>
      </Content>
      <ScrollBar>
        <ScrollButton><Triangle up /></ScrollButton>
        <ScrollThumb />
        <ScrollButton><Triangle /></ScrollButton>
      </ScrollBar>
      <Pointer width="14" height="22" viewBox="0 0 14 22">
        <path d="M12.500 0.500v15l-3-3-3.500 6.500-2.500-1 2.500-6H1.500z" fill="#fff" stroke="#000" />
      </Pointer>
      <Watermark>
        <WatermarkWord>ANY</WatermarkWord>
        <PlayMark />
        <WatermarkWord>RUN</WatermarkWord>
      </Watermark>
    </Body>
    <Taskbar>
      <StartButton><WindowsLogo /></StartButton>
      <SearchBox>
        <SearchIcon />
        <Label>Type here to search</Label>
      </SearchBox>
      <TaskButton $width={48}><TaskViewIcon /></TaskButton>
      <TaskButton $width={54}><EdgeIcon /></TaskButton>
      <TaskButton $width={44}><ExplorerIcon /></TaskButton>
      <TaskButton $width={52}><FirefoxIcon /></TaskButton>
      <TaskButton $width={48} $active><OutlookIcon /></TaskButton>
      <Tray>
        <TrayIcon>
          <svg width="12" height="7" viewBox="0 0 12 7"><path d="M1 6l5-5 5 5" fill="none" stroke="#fff" strokeWidth="1.200" /></svg>
        </TrayIcon>
        <TrayIcon><TrayOutlookIcon /></TrayIcon>
        <TrayIcon><MeetIcon /></TrayIcon>
        <TrayIcon><NetworkIcon /></TrayIcon>
        <TrayIcon><VolumeIcon /></TrayIcon>
        <Clock>
          <Label $ls={-0.2}>10:28 AM</Label>
          <Label $ls={-0.1}>4/7/2025</Label>
        </Clock>
        <TrayIcon $width={40}><NotificationIcon /></TrayIcon>
        <ShowDesktop />
      </Tray>
    </Taskbar>
  </Window>
);

export default App;
